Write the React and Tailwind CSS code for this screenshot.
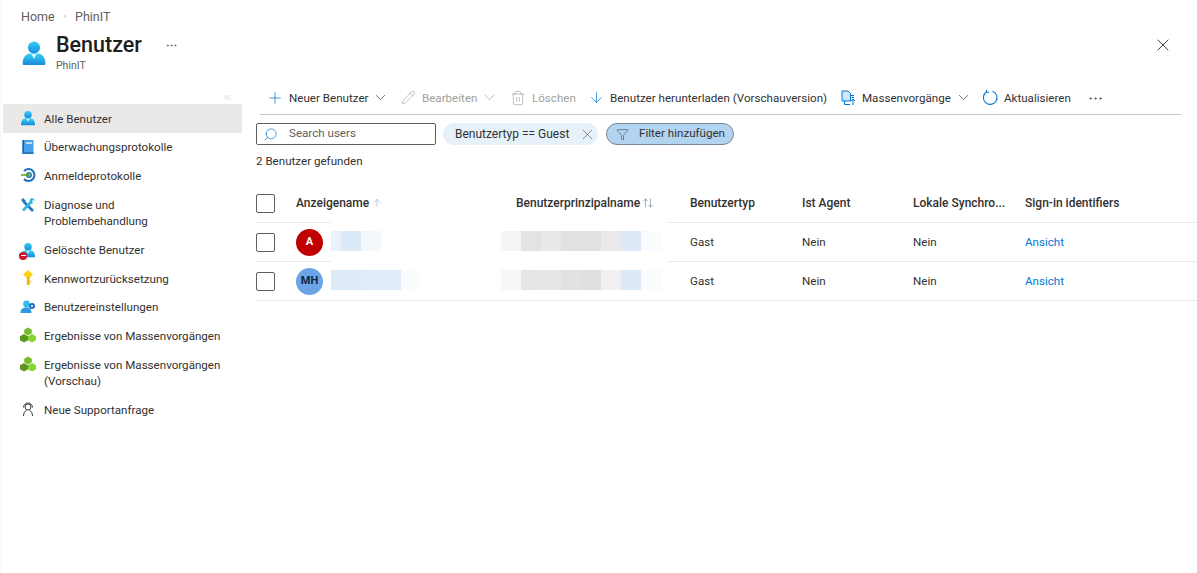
import React from 'react';
import { Plus, ChevronDown, ChevronsLeft, Pencil, Trash2, ArrowDown, MoreHorizontal, Search, X, Filter, ArrowUp, ArrowUpDown } from 'lucide-react';

const UserIcon = ({ size = 16 }) => (
  <svg width={size} height={size} viewBox="0 0 24 24">
    <defs>
      <linearGradient id="ug" x1="0" y1="0" x2="0" y2="1">
        <stop offset="0" stopColor="#32d4f5" />
        <stop offset="1" stopColor="#1988d9" />
      </linearGradient>
    </defs>
    <circle cx="12" cy="7" r="5.6" fill="url(#ug)" />
    <path d="M1.5 22c0-6 3-9 6.5-9.5h8c3.5.5 6.500 3.500 6.500 9.500 0 .6-.4 1-1 1H2.500c-.6 0-1-.4-1-1z" fill="url(#ug)" />
    <path d="M9.500 13h5L12 17.500z" fill="#d6f3fb" />
  </svg>
);

const BookIcon = () => (
  <svg width="16" height="16" viewBox="0 0 16 16">
    <rect x="2.500" y="1" width="11" height="14" rx="1" fill="#4aa0ea" />
    <rect x="2.500" y="1" width="1.500" height="14" fill="#1f5fa8" />
    <rect x="2.500" y="13" width="11" height="2" fill="#2f78c4" />
    <rect x="6" y="3" width="6" height="2" fill="#bcdcf7" />
  </svg>
);

const SignInIcon = () => (
  <svg width="16" height="16" viewBox="0 0 16 16" fill="none">
    <path d="M4 4a6 6 0 1 1 0 8" stroke="#1a6fc4" strokeWidth="2" />
    <circle cx="9" cy="8" r="2.200" stroke="#1a6fc4" strokeWidth="1.500" />
    <path d="M1 8h8M7 5.800 9.200 8 7 10.200" stroke="#5ea30f" strokeWidth="1.300" />
  </svg>
);

const ToolsIcon = () => (
  <svg width="16" height="16" viewBox="0 0 16 16" fill="none">
    <path d="M3.500 4.500 13 14" stroke="#1a78c9" strokeWidth="2.600" />
    <path d="M12 4 3 13.500" stroke="#32b5e0" strokeWidth="2.600" />
    <path d="M1 3 3 1 6 4 4 6z" fill="#1a78c9" />
    <path d="M10.500 1.500c2-1 4 .2 4.500 2.500L13 3l-1.500 1.500L13 6.500c-1.500.5-3.500-.5-3.500-2.500z" fill="#32b5e0" />
  </svg>
);

const DeletedUserIcon = () => (
  <div className="relative w-4 h-4">
    <UserIcon size={16} />
    <div className="absolute -left-[1px] bottom-[-2px] w-[8px] h-[8px] rounded-full bg-[#d3122a] flex items-center justify-center">
      <div className="w-[5px] h-[1.500px] bg-white" />
    </div>
  </div>
);

const KeyIcon = () => (
  <svg width="16" height="16" viewBox="0 0 16 16">
    <path d="M8 .5 12.500 4.500 8 8.500 3.500 4.500z" fill="#fcd116" stroke="#fcd116" strokeLinejoin="round" />
    <rect x="6.800" y="7" width="2.800" height="8" fill="#f2b600" />
    <rect x="9.500" y="11" width="1.200" height="1.500" fill="#f2b600" />
  </svg>
);

const UserGearIcon = () => (
  <svg width="16" height="16" viewBox="0 0 16 16">
    <circle cx="6.500" cy="5" r="3.400" fill="#32bdf0" />
    <path d="M0.500 14c0-4 2.500-5.500 6-5.500s4.500 1.500 5 5.500z" fill="#2a9be0" />
    <circle cx="12" cy="7" r="3" fill="#1a6fc4" />
    <circle cx="12" cy="7" r="1.100" fill="#fff" />
  </svg>
);

const CubesIcon = () => (
  <svg width="16" height="16" viewBox="0 0 16 16">
    <path d="M8 .5 11.800 2.700V6.300L8 8.500 4.200 6.300V2.700z" fill="#76bc2d" />
    <path d="M4 7 8 9.200V13.200L4 15.500 0 13.200V9.200z" fill="#5e9624" />
    <path d="M12 7 16 9.200V13.200L12 15.500 8 13.200V9.200z" fill="#86d633" />
  </svg>
);

const SupportIcon = () => (
  <svg width="16" height="16" viewBox="0 0 16 16" fill="none" stroke="#3b3a39" strokeWidth="1">
    <circle cx="8" cy="6" r="3" />
    <path d="M3.500 6.500a4.500 4.500 0 1 1 9 0" />
    <path d="M3.500 15c0-3 1.500-5 3-5.500M12.500 15c0-3-1.500-5-3-5.500" />
  </svg>
);

const BulkIcon = () => (
  <svg width="16" height="16" viewBox="0 0 16 16" fill="none" stroke="#0078d4" strokeWidth="1">
    <path d="M2 1h6l2.500 2.500V11H2z" fill="#cfe6f8" />
    <path d="M4.500 11v3.500H10" />
    <path d="M13 15V9M11 11l2-2 2 2" />
    <path d="M10.500 5.500H14M11.500 7.500H14" />
  </svg>
);

const RefreshIcon = () => (
  <svg width="17" height="17" viewBox="0 0 17 17" fill="none" stroke="#0078d4" strokeWidth="1.100">
    <path d="M10.500 2.200a6.800 6.800 0 1 1-5.800.6" />
    <path d="M4.500 .8v2.400h2.400" />
  </svg>
);

const navItems = [
  { id: 'all', label: 'Alle Benutzer', icon: <UserIcon />, active: true },
  { id: 'audit', label: 'Überwachungsprotokolle', icon: <BookIcon /> },
  { id: 'signin', label: 'Anmeldeprotokolle', icon: <SignInIcon /> },
  { id: 'diag', label: <>Diagnose und<br />Problembehandlung</>, icon: <ToolsIcon />, tall: true },
  { id: 'deleted', label: 'Gelöschte Benutzer', icon: <DeletedUserIcon /> },
  { id: 'reset', label: 'Kennwortzurücksetzung', icon: <KeyIcon /> },
  { id: 'settings', label: 'Benutzereinstellungen', icon: <UserGearIcon /> },
  { id: 'bulk', label: 'Ergebnisse von Massenvorgängen', icon: <CubesIcon /> },
  { id: 'bulk2', label: <>Ergebnisse von Massenvorgängen<br />(Vorschau)</>, icon: <CubesIcon />, tall: true },
  { id: 'support', label: 'Neue Supportanfrage', icon: <SupportIcon /> },
];

const rows = [
  {
    initials: 'A',
    avatar: 'bg-[#c00000] text-white',
    name: ['w-[10px] bg-[#eaf3fb]', 'w-[20px] bg-[#dceaf7]', 'w-[20px] bg-[#f3f8fc]'],
    upn: ['bg-[#f5f5f5]', 'bg-[#e3e3e3]', 'bg-[#e8e8e8]', 'bg-[#e1e1e1]', 'bg-[#e1e1e1]', 'bg-[#eaeaea]', 'bg-[#dde9f6]', 'bg-[#fafbfe]'],
  },
  {
    initials: 'MH',
    avatar: 'bg-[#6ba5e7] text-[#10243e]',
    name: ['w-[30px] bg-[#deebf7]', 'w-[40px] bg-[#e1ecf8]', 'w-[20px] bg-[#fbfcfe]'],
    upn: ['bg-[#f7f7f7]', 'bg-[#e5e5e5]', 'bg-[#e6e6e6]', 'bg-[#e2e2e2]', 'bg-[#dfdfdf]', 'bg-[#f0f0f0]', 'bg-[#dde9f6]', 'bg-[#fafbfe]'],
  },
];

const Checkbox = () => <div className="w-[19px] h-[19px] border border-[#605e5c] rounded-[2px] bg-white" />;

const ToolbarButton = ({ icon, label, chevron, disabled, width }) => (
  <div className={`flex items-center whitespace-nowrap ${width} ${disabled ? 'text-[#a19f9d]' : 'text-[#323130]'}`}>
    <div className="w-[18px] flex justify-center shrink-0">{icon}</div>
    <span className="ml-[5px] pt-[1px]">{label}</span>
    {chevron && <ChevronDown size={17} strokeWidth={1} className={`ml-[4px] ${disabled ? 'text-[#a19f9d]' : 'text-[#323130]'}`} />}
  </div>
);

export default function App() {
  return (
    <div className="w-[1197px] h-[573px] overflow-hidden bg-white font-['Roboto',sans-serif] text-[11.600px] text-[#323130] border-l-2 border-[#fafafa] box-border">
      <div className="flex items-center h-[32px] pl-[19px] pt-[2px] text-[12.500px] text-[#605e5c]">
        <span>Home</span>
        <span className="mx-[9px] text-[8px] text-[#a19f9d]">›</span>
        <span>PhinIT</span>
      </div>
      <div className="flex h-[47px] pl-[19px] pr-[24px] items-start">
        <div className="mt-[8px]"><UserIcon size={26} /></div>
        <div className="ml-[9px]">
          <div className="flex items-center">
            <span className="text-[21.500px] leading-[26px] font-medium text-[#201f1e]">Benutzer</span>
            <MoreHorizontal size={13} strokeWidth={1} className="ml-[23px] text-[#323130]" />
          </div>
          <div className="text-[10.500px] leading-[14px] mt-[1px] text-[#605e5c]">PhinIT</div>
        </div>
        <X size={20} strokeWidth={1.100} className="ml-auto mt-[3px] text-[#323130]" />
      </div>
      <div className="flex">
        <aside className="w-[240px] shrink-0 pl-[1px]">
          <div className="h-[25px] flex justify-end items-end pr-[9px] pb-[1px] text-[#a19f9d]">
            <ChevronsLeft size={11} strokeWidth={1} />
          </div>
          {navItems.map((item) => (
            <div
              key={item.id}
              className={`flex pl-[17px] pr-[14px] items-center ${item.tall ? 'h-[45.750px]' : 'h-[28.500px]'} ${item.active ? 'bg-[#ebe9e8]' : ''}`}
            >
              <div className={`w-[16px] shrink-0 flex ${item.tall ? 'self-start mt-[7px]' : ''}`}>{item.icon}</div>
              <span className="ml-[8px] leading-[16px] pt-[1px]">{item.label}</span>
            </div>
          ))}
        </aside>
        <main className="flex-1 min-w-0 pl-[14px] pt-[3px] pr-[14px]">
          <div className="flex items-center h-[33px] border-b border-[#c8c6c4] w-[921px] ml-[4px] pl-[6px]">
            <ToolbarButton width="w-[133px]" icon={<Plus size={18} strokeWidth={1} className="text-[#0078d4]" />} label="Neuer Benutzer" chevron />
            <ToolbarButton width="w-[110px]" icon={<Pencil size={15} strokeWidth={1} className="text-[#a19f9d]" />} label="Bearbeiten" chevron disabled />
            <ToolbarButton width="w-[78px]" icon={<Trash2 size={16} strokeWidth={1} className="text-[#a19f9d]" />} label="Löschen" disabled />
            <ToolbarButton width="w-[252px]" icon={<ArrowDown size={17} strokeWidth={1} className="text-[#0078d4]" />} label="Benutzer herunterladen (Vorschauversion)" />
            <ToolbarButton width="w-[142px]" icon={<BulkIcon />} label="Massenvorgänge" chevron />
            <ToolbarButton width="w-[106px]" icon={<RefreshIcon />} label="Aktualisieren" />
            <MoreHorizontal size={17} strokeWidth={1} className="text-[#323130]" />
          </div>
          <div className="flex items-center mt-[8px] h-[22px]">
            <div className="flex items-center w-[180px] h-[22px] border border-[#605e5c] rounded-[2px] pl-[6px]">
              <Search size={15} strokeWidth={1.100} className="text-[#0078d4] -scale-x-100" />
              <span className="ml-[11px] text-[#605e5c]">Search users</span>
            </div>
            <div className="flex items-center ml-[7px] h-[22px] w-[155px] rounded-full bg-[#e6f1fa] pl-[12px] text-[12px]">
              <span>Benutzertyp == Guest</span>
              <X size={17} strokeWidth={1} className="ml-auto mr-[2px] text-[#605e5c]" />
            </div>
            <div className="flex items-center ml-[8px] h-[22px] w-[128px] rounded-full bg-[#b3d4f0] border border-[#7a8794] pl-[9px]">
              <Filter size={13} strokeWidth={1} className="text-[#323130]" />
              <span className="ml-[10px]">Filter hinzufügen</span>
            </div>
          </div>
          <div className="mt-[8px] leading-[16px]">2 Benutzer gefunden</div>
          <div className="mt-[14px] -mr-[14px]">
            <div className="flex h-[39px] items-center font-medium text-[12px] text-[#323130]">
              <div className="w-[40px] pt-[2px]"><Checkbox /></div>
              <div className="w-[220px] flex items-center">Anzeigename<ArrowUp size={12} strokeWidth={1} className="ml-[2px] text-[#7f9cc4]" /></div>
              <div className="w-[174px] flex items-center whitespace-nowrap">Benutzerprinzipalname<ArrowUpDown size={12} strokeWidth={1} className="ml-[2px] text-[#3d5a8a]" /></div>
              <div className="w-[112px]">Benutzertyp</div>
              <div className="w-[111px]">Ist Agent</div>
              <div className="w-[112px] whitespace-nowrap">Lokale Synchro...</div>
              <div className="whitespace-nowrap">Sign-in identifiers</div>
            </div>
            {rows.map((row) => (
              <div key={row.initials} className="flex h-[39px]">
                <div className="w-[75px] flex items-center border-t border-[#edebe9] pt-[1px]">
                  <div className="w-[40px]"><Checkbox /></div>
                  <div className={`w-[27px] h-[27px] rounded-full flex items-center justify-center text-[11px] font-bold ${row.avatar}`}>{row.initials}</div>
                </div>
                <div className="w-[336px] flex items-center pb-[1px]">
                  <div className="w-[170px] h-[20px] flex shrink-0">
                    {row.name.map((cls, i) => <div key={i} className={cls} />)}
                  </div>
                  <div className="h-[20px] flex">
                    {row.upn.map((cls, i) => <div key={i} className={`w-[20px] ${cls}`} />)}
                  </div>
                </div>
                <div className="flex-1 flex items-center border-t border-[#edebe9] pt-[2px]">
                  <div className="w-[23px]" />
                  <div className="w-[112px]">Gast</div>
                  <div className="w-[111px]">Nein</div>
                  <div className="w-[112px]">Nein</div>
                  <div className="text-[#0078d4]">Ansicht</div>
                </div>
              </div>
            ))}
            <div className="border-t border-[#edebe9]" />
          </div>
        </main>
      </div>
    </div>
  );
}
